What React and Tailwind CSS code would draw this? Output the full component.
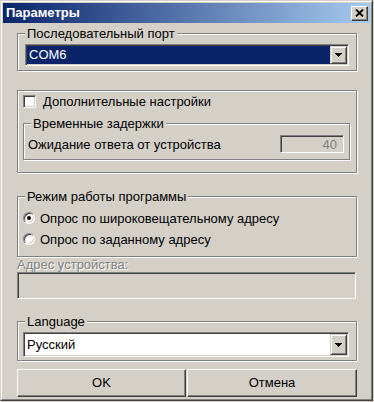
import React from "react";

const sunken =
  "border border-t-[#808080] border-l-[#808080] border-r-white border-b-white shadow-[inset_1px_1px_0_#404040,inset_-1px_-1px_0_#d4d0c8]";
const raised =
  "border border-t-white border-l-white border-r-[#404040] border-b-[#404040] shadow-[inset_-1px_-1px_0_#808080]";
const raisedArrow =
  "border border-t-[#d4d0c8] border-l-[#d4d0c8] border-r-[#404040] border-b-[#404040] shadow-[inset_1px_1px_0_#fff,inset_-1px_-1px_0_#808080]";
const etched =
  "relative border border-[#808080] shadow-[inset_1px_1px_0_#fff,1px_1px_0_#fff]";

function Legend({ children }) {
  return (
    <span className="absolute -top-[8px] left-[7px] px-[2px] bg-[#d4d0c8] leading-[15px] text-black">
      {children}
    </span>
  );
}

function Arrow() {
  return (
    <svg width="7" height="4" viewBox="0 0 7 4" shapeRendering="crispEdges">
      <rect x="0" y="0" width="7" height="1" fill="#000" />
      <rect x="1" y="1" width="5" height="1" fill="#000" />
      <rect x="2" y="2" width="3" height="1" fill="#000" />
      <rect x="3" y="3" width="1" height="1" fill="#000" />
    </svg>
  );
}

function ArrowButton() {
  return (
    <div className={`w-[17px] h-full flex items-center justify-center bg-[#d4d0c8] ${raisedArrow}`}>
      <Arrow />
    </div>
  );
}

function Radio({ checked }) {
  return (
    <div
      className={`w-[12px] h-[12px] rounded-full bg-white flex items-center justify-center ${sunken}`}
    >
      {checked && <div className="w-[4px] h-[4px] rounded-full bg-black" />}
    </div>
  );
}

export default function App() {
  return (
    <div
      className="w-[374px] h-[402px] bg-[#d4d0c8] text-[13px] text-black"
      style={{ fontFamily: '"Liberation Sans", Arial, sans-serif' }}
    >
      <div className="w-[373px] h-[401px] border border-t-[#d4d0c8] border-l-[#d4d0c8] border-r-[#404040] border-b-[#404040]">
        <div className="h-full border border-t-white border-l-white border-r-[#808080] border-b-[#808080] p-px flex flex-col bg-[#d4d0c8]">
          {/* Title bar */}
          <div className="h-[20px] flex items-center bg-[linear-gradient(to_right,#0a246a,#a6caf0)] pl-[3px] pr-[2px]">
            <span className="flex-1 text-white font-bold text-[13px] leading-[20px]">
              Параметры
            </span>
            <div className={`w-[17px] h-[15px] bg-[#d4d0c8] flex items-center justify-center ${raised}`}>
              <svg width="9" height="8" viewBox="0 0 9 8">
                <path d="M1 0.5 L8 7.5 M8 0.5 L1 7.5" stroke="#000" strokeWidth="1.8" />
              </svg>
            </div>
          </div>

          {/* Content */}
          <div className="ml-[14px] w-[340px] flex flex-col">
            {/* Group 1 */}
            <div className={`${etched} mt-[10px] pt-[10px] pb-[4px] pl-[7px] pr-[7px]`}>
              <Legend>Последовательный порт</Legend>
              <div className={`h-[22px] bg-white p-px flex ${sunken}`}>
                <div className="flex-1 bg-[#0a246a] text-white leading-[18px] pl-[2px]">
                  COM6
                </div>
                <ArrowButton />
              </div>
            </div>

            {/* Group 2 */}
            <div className={`${etched} mt-[19px] pt-[4px] pb-[12px] pl-[5px] pr-[6px]`}>
              <div className="flex items-center h-[13px] gap-[7px]">
                <div className={`w-[13px] h-[13px] bg-white ${sunken}`} />
                <span className="leading-[15px]">Дополнительные настройки</span>
              </div>
              <div className={`${etched} mt-[15px] pt-[11px] pb-[6px] pl-[4px] pr-[5px] flex items-center`}>
                <Legend>Временные задержки</Legend>
                <span className="flex-1 leading-[15px]">Ожидание ответа от устройства</span>
                <div className={`w-[64px] h-[18px] bg-[#d4d0c8] flex items-center justify-end pr-[6px] ${sunken}`}>
                  <span className="text-[#808080] leading-[15px]">40</span>
                </div>
              </div>
            </div>

            {/* Group 3 */}
            <div className={`${etched} mt-[23px] pt-[13px] pb-[9px] pl-[5px] pr-[6px] flex flex-col gap-[5px]`}>
              <Legend>Режим работы программы</Legend>
              <div className="flex items-center h-[16px] gap-[5px]">
                <Radio checked />
                <span className="leading-[15px]">Опрос по широковещательному адресу</span>
              </div>
              <div className="flex items-center h-[16px] gap-[5px]">
                <Radio />
                <span className="leading-[15px]">Опрос по заданному адресу</span>
              </div>
            </div>

            {/* Address */}
            <div className="leading-[15px] text-[#808080] [text-shadow:1px_1px_0_#fff]">
              Адрес устройства:
            </div>
            <div className={`h-[27px] w-[339px] bg-[#d4d0c8] ${sunken}`} />

            {/* Group 4 */}
            <div className={`${etched} mt-[22px] pt-[10px] pb-[3px] pl-[5px] pr-[7px]`}>
              <Legend>Language</Legend>
              <div className={`h-[25px] bg-white p-px flex ${sunken}`}>
                <div className="flex-1 leading-[21px] pl-[2px]">Русский</div>
                <ArrowButton />
              </div>
            </div>

            {/* Buttons */}
            <div className="mt-[8px] flex gap-[1px]">
              <div className={`w-[169px] h-[28px] bg-[#d4d0c8] flex items-center justify-center ${raised}`}>
                OK
              </div>
              <div className={`w-[170px] h-[28px] bg-[#d4d0c8] flex items-center justify-center ${raised}`}>
                Отмена
              </div>
            </div>
          </div>
        </div>
      </div>
    </div>
  );
}
